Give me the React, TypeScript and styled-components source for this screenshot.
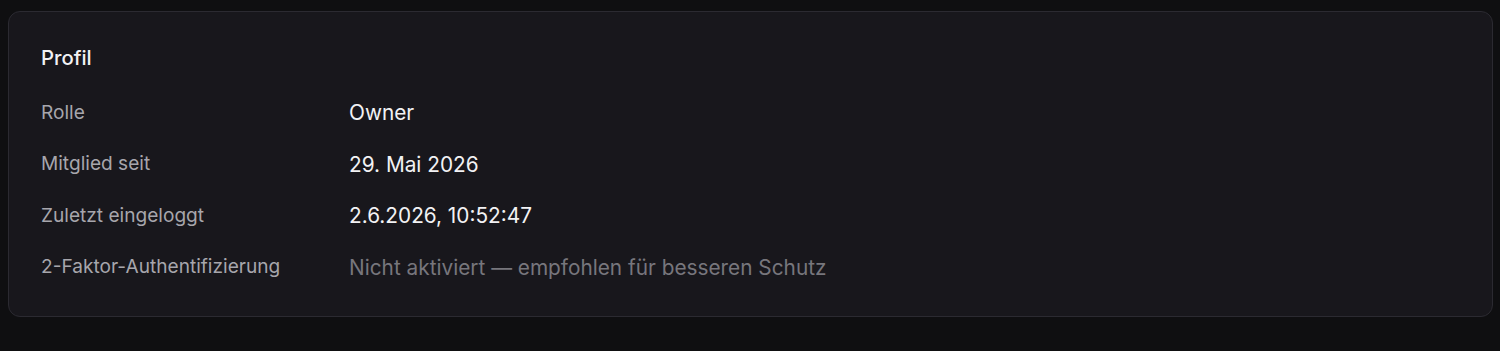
import styled, { createGlobalStyle } from 'styled-components';

const GlobalStyle = createGlobalStyle`
  html, body {
    margin: 0;
    padding: 0;
    background: #0f0f11;
  }
  body {
    font-family: Inter, "Noto Sans", sans-serif;
    -webkit-font-smoothing: antialiased;
  }
`;

interface ProfileRow {
  label: string;
  value: string;
  muted?: boolean;
}

const rows: ProfileRow[] = [
  { label: 'Rolle', value: 'Owner' },
  { label: 'Mitglied seit', value: '29. Mai 2026' },
  { label: 'Zuletzt eingeloggt', value: '2.6.2026, 10:52:47' },
  { label: '2-Faktor-Authentifizierung', value: 'Nicht aktiviert — empfohlen für besseren Schutz', muted: true },
];

const App = () => {
  return (
    <>
      <GlobalStyle />
      <Page>
        <Card>
          <Title>Profil</Title>
          <List>
            {rows.map((row) => (
              <Row key={row.label}>
                <Label>{row.label}</Label>
                <Value muted={row.muted}>{row.value}</Value>
              </Row>
            ))}
          </List>
        </Card>
      </Page>
    </>
  );
};

export default App;

const Page = styled.div`
  padding: 11px 7px 34px 8px;
`;

const Card = styled.section`
  background: #18171c;
  border: 1px solid #2b2a31;
  border-radius: 12px;
  padding: 33px 32px 22.5px 32px;
`;

const Title = styled.h2`
  margin: 0 0 16.5px 0;
  font-size: 20.3px;
  font-weight: 500;
  line-height: 26px;
  color: #f2f2f4;
`;

const List = styled.dl`
  margin: 0;
  display: flex;
  flex-direction: column;
`;

const Row = styled.div`
  display: grid;
  grid-template-columns: 308px 1fr;
  align-items: center;
  height: 51.5px;
`;

const Label = styled.dt`
  font-size: 19.1px;
  line-height: 24px;
  color: #a7a6ac;
  margin-top: -3px;
`;

const Value = styled.dd<{ muted?: boolean }>`
  margin: 0;
  font-size: 20.8px;
  line-height: 26px;
  color: ${(props) => (props.muted ? '#77767c' : '#f2f2f4')};
`;
